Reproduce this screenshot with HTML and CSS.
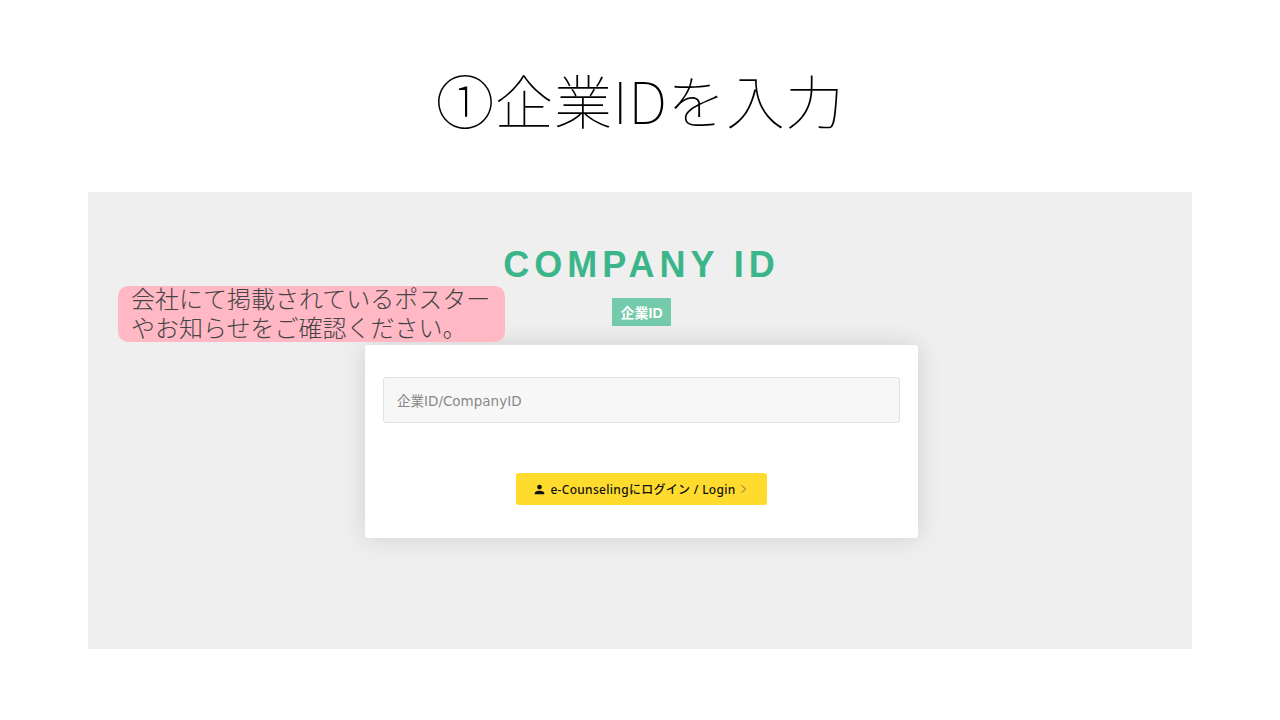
FILE: index.html
```html
<!DOCTYPE html>
<html lang="ja">
<head>
<meta charset="utf-8">
<title>企業IDを入力</title>
<link rel="stylesheet" href="styles.css">
</head>
<body>
<main class="slide">
  <h1 class="slide-title">①企業IDを入力</h1>
  <section class="panel">
    <h2 class="company-heading">COMPANY ID</h2>
    <span class="badge">企業ID</span>
    <form class="card">
      <input class="field" type="text" placeholder="企業ID/CompanyID">
      <button class="login" type="button">
        <svg class="user-icon" viewBox="0 0 24 24" aria-hidden="true"><path d="M12 12a4.4 4.4 0 1 0 0-8.8 4.4 4.4 0 0 0 0 8.8zm0 2.2c-3 0-8.8 1.5-8.8 4.4v2.2h17.6v-2.2c0-2.9-5.8-4.4-8.8-4.4z"/></svg>
        <span>e-Counselingにログイン / Login</span>
        <svg class="chevron" viewBox="0 0 8 12" aria-hidden="true"><path d="M1.5 1.5 6.5 6l-5 4.5"/></svg>
      </button>
    </form>
    <p class="callout"><span class="callout-text">会社にて掲載されているポスターやお知らせをご確認ください。</span></p>
  </section>
</main>
</body>
</html>
```
FILE: styles.css
```css
* { box-sizing: border-box; }
html, body { margin: 0; height: 100%; background: #fff; }
.slide {
  width: 1280px;
  height: 720px;
  overflow: hidden;
  display: flex;
  flex-direction: column;
  font-family: "Noto Sans CJK JP", sans-serif;
}
.slide-title {
  margin: 0;
  height: 192px;
  padding-top: 7px;
  display: flex;
  align-items: center;
  justify-content: center;
  font-size: 58.5px;
  font-weight: 100;
  letter-spacing: 0.5px;
  line-height: 1;
  color: #000;
}
.panel {
  position: relative;
  margin: 0 88px;
  height: 457px;
  background: #efefef;
  display: flex;
  flex-direction: column;
  align-items: center;
  padding-top: 50px;
  padding-left: 3px;
}
.company-heading {
  margin: 0;
  font-family: "Liberation Sans", Arial, sans-serif;
  font-size: 36px;
  line-height: 46px;
  font-weight: 700;
  letter-spacing: 5px;
  color: #3bb58a;
}
.badge {
  margin-top: 10px;
  width: 59px;
  height: 28px;
  display: flex;
  align-items: center;
  justify-content: center;
  background: #73cbab;
  color: #fff;
  font-family: "Liberation Sans", "Noto Sans CJK JP", sans-serif;
  font-size: 14px;
  font-weight: 700;
}
.card {
  margin-top: 19px;
  width: 553px;
  height: 193px;
  background: #fff;
  border-radius: 3px;
  box-shadow: 0 0 26px rgba(0, 0, 0, 0.13);
  padding: 32px 18px 0;
  display: flex;
  flex-direction: column;
  align-items: center;
}
.field {
  width: 100%;
  height: 46px;
  padding: 1px 13px 0;
  background: #f7f7f7;
  border: 1px solid #e2e2e2;
  border-radius: 3px;
  font-family: "DejaVu Sans", "Noto Sans CJK JP", sans-serif;
  font-size: 13.5px;
  color: #888;
}
.field::placeholder { color: #888; opacity: 1; }
.login {
  margin-top: 50px;
  width: 251px;
  height: 32px;
  display: flex;
  align-items: center;
  justify-content: center;
  gap: 4px;
  padding: 0 3px 0 0;
  background: #ffdb2e;
  border: 0;
  border-radius: 3px;
  font-family: "Noto Sans", "Noto Sans CJK JP", sans-serif;
  font-size: 12px;
  font-weight: 500;
  letter-spacing: 0.3px;
  color: #111;
}
.user-icon { width: 13px; height: 13px; fill: #111; }
.chevron { width: 7px; height: 10px; fill: none; stroke: #555; stroke-width: 1; }
.callout {
  position: absolute;
  left: 30px;
  top: 94px;
  margin: 0;
  width: 387px;
  height: 56px;
  padding: 0 13px;
  background: #ffb8c4;
  border-radius: 10px;
  font-size: 24px;
  font-weight: 200;
  line-height: 29px;
  color: #444;
}
.callout-text { display: block; margin-top: -3px; }
```
